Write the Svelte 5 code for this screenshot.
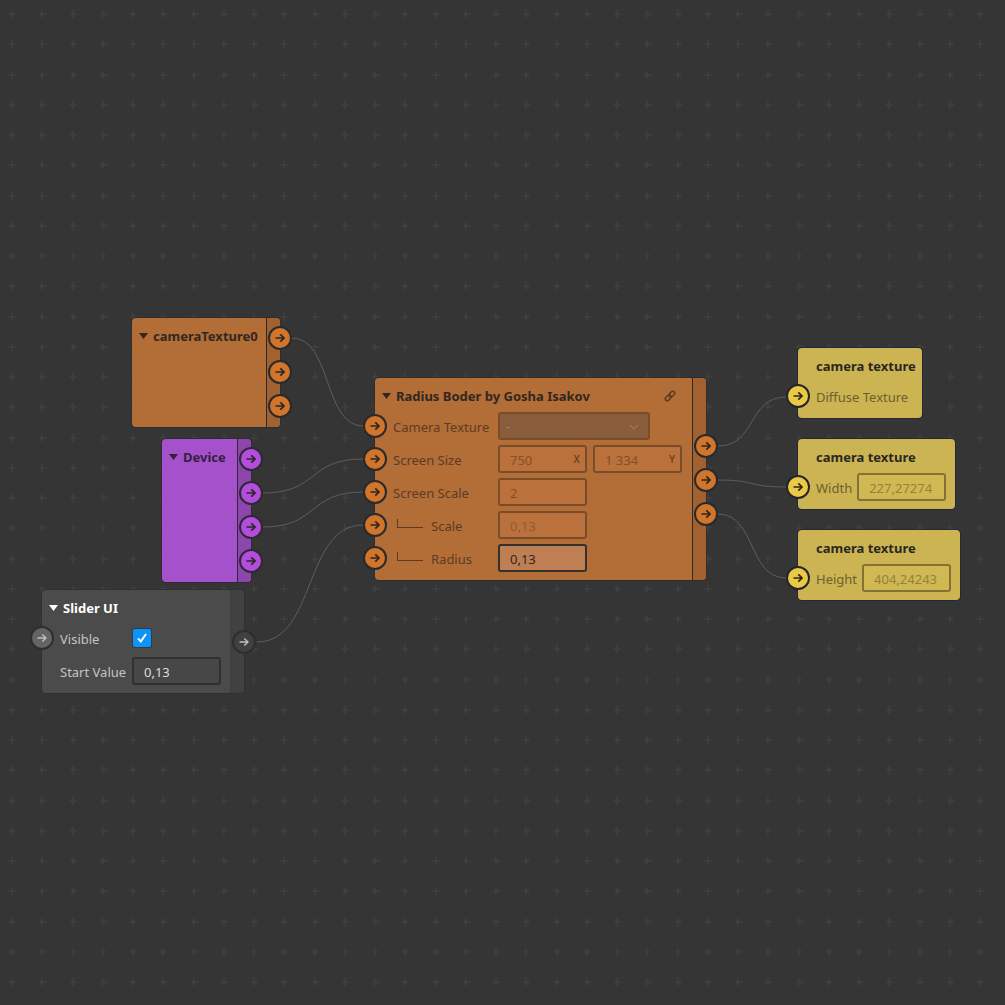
<script>
  const nodes = [
    {
      id: 'cam', title: 'cameraTexture0', theme: 'orange',
      x: 132, y: 318, width: 148, arrow: true, rows: [], outputs: 3, outTop: 8
    },
    {
      id: 'device', title: 'Device', theme: 'purple',
      x: 162, y: 439, width: 89, arrow: true, rows: [], outputs: 4, outTop: 8
    },
    {
      id: 'slider', title: 'Slider UI', theme: 'grey',
      x: 42, y: 590, width: 202, arrow: true, labelWidth: 72,
      rows: [
        { label: 'Visible', port: true, check: true },
        { label: 'Start Value', fields: [{ value: '0,13' }] }
      ],
      outputs: 1, outTop: 40
    },
    {
      id: 'radius', title: 'Radius Boder by Gosha Isakov', theme: 'orange',
      x: 375, y: 378, width: 331, arrow: true, link: true, labelWidth: 105,
      rows: [
        { label: 'Camera Texture', port: true, select: true },
        {
          label: 'Screen Size', port: true,
          fields: [
            { value: '750', unit: 'X', off: true },
            { value: '1 334', unit: 'Y', off: true }
          ]
        },
        { label: 'Screen Scale', port: true, fields: [{ value: '2', off: true }] },
        { label: 'Scale', port: true, child: true, fields: [{ value: '0,13', off: true, faint: true }] },
        { label: 'Radius', port: true, child: true, fields: [{ value: '0,13' }] }
      ],
      outputs: 3, outTop: 56
    },
    {
      id: 'diffuse', title: 'camera texture', theme: 'yellow',
      x: 798, y: 348, width: 124,
      rows: [{ label: 'Diffuse Texture', port: true }]
    },
    {
      id: 'width', title: 'camera texture', theme: 'yellow',
      x: 798, y: 439, width: 157,
      rows: [{ label: 'Width', port: true, fields: [{ value: '227,27274', off: true }] }]
    },
    {
      id: 'height', title: 'camera texture', theme: 'yellow',
      x: 798, y: 530, width: 162,
      rows: [{ label: 'Height', port: true, fields: [{ value: '404,24243', off: true }] }]
    }
  ];

  // x1, y1, x2, y2
  const wires = [
    [292, 338, 363, 426],
    [263, 493, 363, 459],
    [263, 527, 363, 492],
    [257, 642, 363, 525],
    [718, 446, 786, 397],
    [718, 480, 786, 487],
    [718, 514, 786, 578]
  ];

  const steps = [12, 42, 73, 103];

  function curve([x1, y1, x2, y2]) {
    const dx = (x2 - x1) * 0.56;
    return `M${x1} ${y1}C${x1 + dx} ${y1} ${x2 - dx} ${y2} ${x2} ${y2}`;
  }
</script>

{#snippet port(kind)}
  <span class="port {kind}">
    <svg viewBox="0 0 12 12" width="12" height="12" aria-hidden="true">
      <path d="M1.5 6H10M6.3 2.4L10 6L6.3 9.6" />
    </svg>
  </span>
{/snippet}

<main class="canvas">
  <svg class="layer" aria-hidden="true">
    <defs>
      <pattern id="grid" width="121" height="121" patternUnits="userSpaceOnUse">
        {#each steps as y}
          {#each steps as x}
            <path class="cross" d="M{x - 3} {y + 2}h7M{x} {y - 2}v8" />
          {/each}
        {/each}
      </pattern>
    </defs>
    <rect width="100%" height="100%" fill="url(#grid)" />
    {#each wires as wire}
      <path class="wire" d={curve(wire)} />
    {/each}
  </svg>

  {#each nodes as node (node.id)}
    <section class="node {node.theme}" style="left: {node.x}px; top: {node.y}px; width: {node.width}px">
      <div class="body">
        <header class:indent={!node.arrow}>
          {#if node.arrow}
            <svg class="arrow" viewBox="0 0 9 6" width="9" height="6" aria-hidden="true">
              <path d="M0 0H9L4.5 6Z" />
            </svg>
          {/if}
          <h2>{node.title}</h2>
          {#if node.link}
            <svg class="link" viewBox="0 0 12 12" width="12" height="12" aria-hidden="true">
              <g transform="rotate(-45 6 6)">
                <rect x="0.2" y="4" width="6.6" height="4" rx="2" />
                <rect x="5.2" y="4" width="6.6" height="4" rx="2" />
              </g>
            </svg>
          {/if}
        </header>

        {#if node.rows.length}
          <div class="rows">
            {#each node.rows as row, i}
              <div class="row" class:wired={row.port}>
                {#if row.port}{@render port('in')}{/if}
                <label
                  for="{node.id}-{i}-0"
                  class:child={row.child}
                  style:width={node.labelWidth ? `${node.labelWidth}px` : null}
                >
                  {#if row.child}<i class="branch"></i>{/if}{row.label}
                </label>
                {#if row.select}
                  <span class="select">
                    <select id="{node.id}-{i}-0" disabled><option>-</option></select>
                    <svg viewBox="0 0 10 6" width="10" height="6" aria-hidden="true">
                      <path d="M1 1L5 5L9 1" />
                    </svg>
                  </span>
                {/if}
                {#if row.check}
                  <span class="check">
                    <input type="checkbox" id="{node.id}-{i}-0" checked />
                    <svg viewBox="0 0 12 12" width="12" height="12" aria-hidden="true">
                      <path d="M2 6.5L4.8 9.5L10 2" />
                    </svg>
                  </span>
                {/if}
                {#if row.fields}
                  <div class="fields">
                    {#each row.fields as field, f}
                      <span class="field">
                        <input
                          type="text"
                          id="{node.id}-{i}-{f}"
                          aria-label={field.unit ? `${row.label} ${field.unit}` : null}
                          class:faint={field.faint}
                          value={field.value}
                          disabled={field.off}
                        />
                        {#if field.unit}<small>{field.unit}</small>{/if}
                      </span>
                    {/each}
                  </div>
                {/if}
              </div>
            {/each}
          </div>
        {/if}
      </div>

      {#if node.outputs}
        <div class="rail" style="padding-top: {node.outTop}px">
          {#each Array(node.outputs) as _}
            {@render port('out')}
          {/each}
        </div>
      {/if}
    </section>
  {/each}
</main>

<style>
  :global(body) {
    margin: 0;
    background: #353535;
  }

  .canvas {
    position: relative;
    min-height: 100vh;
    overflow: hidden;
    font-family: "Noto Sans", sans-serif;
    font-size: 13px;
    line-height: 18px;
  }

  .layer {
    position: absolute;
    inset: 0;
    width: 100%;
    height: 100%;
  }

  .cross {
    fill: none;
    stroke: #444444;
    stroke-width: 1;
  }

  .wire {
    fill: none;
    stroke: #5e5e5e;
    stroke-width: 1;
  }

  .node {
    position: absolute;
    display: flex;
    border-radius: 4px;
    background: var(--body);
    box-shadow: 0 0 0 1px var(--edge);
    color: var(--text);
  }

  .orange {
    --body: #b36d36;
    --rail: #a16130;
    --port: #d0752b;
    --edge: #2b2f34;
    --ring: #2b2a2a;
    --title: #33271f;
    --text: #5c3c24;
    --off: #845029;
    --line: #7a4c2a;
    --field: #bb713b;
  }

  .purple {
    --body: #a651cc;
    --rail: #8d46ad;
    --port: #b24ddd;
    --edge: #2e2b34;
    --ring: #2e2a32;
    --title: #33203c;
  }

  .grey {
    --body: #4b4b4b;
    --rail: #414141;
    --port: #646464;
    --edge: #303030;
    --ring: #2e2e2e;
    --title: #ffffff;
    --text: #c4c4c4;
    --line: #303030;
    --field: #474747;
  }

  .yellow {
    --body: #ccb452;
    --rail: #b39d45;
    --port: #eac946;
    --edge: #26283a;
    --ring: #25242b;
    --title: #2a2722;
    --text: #6b602f;
    --off: #94823c;
    --line: #827335;
    --field: #d0b853;
  }

  .body {
    flex: 1;
    min-width: 0;
  }

  header {
    box-sizing: border-box;
    display: flex;
    align-items: center;
    height: 34px;
    padding: 2px 16px 0 7px;
  }

  header.indent {
    padding: 2px 0 0 18px;
  }

  h2 {
    flex: 1;
    margin: 0;
    font-size: 13px;
    line-height: 18px;
    font-weight: 700;
    white-space: nowrap;
    color: var(--title);
  }

  .arrow {
    flex: none;
    margin-right: 5px;
    fill: var(--title);
  }

  .link {
    fill: none;
    stroke: var(--text);
    stroke-width: 1.5;
  }

  .rows {
    display: flex;
    flex-direction: column;
    gap: 5px;
    padding-bottom: 8px;
  }

  .row {
    display: flex;
    align-items: center;
    height: 28px;
    padding-left: 18px;
  }

  .row.wired {
    padding-left: 0;
  }

  .port {
    box-sizing: border-box;
    flex: none;
    display: flex;
    align-items: center;
    justify-content: center;
    width: 24px;
    height: 24px;
    border: 2px solid var(--ring);
    border-radius: 50%;
    background: var(--port);
  }

  .port path {
    fill: none;
    stroke: #2c2623;
    stroke-width: 1.7;
  }

  .port.in {
    margin-left: -12px;
    margin-right: 6px;
  }

  .grey .port path {
    stroke: #c0c0c0;
    stroke-width: 1.4;
  }

  .grey .port.out {
    background: #404040;
  }

  label {
    display: flex;
    align-items: center;
    flex: none;
    padding-top: 2px;
    font-size: 13px;
    white-space: nowrap;
  }

  .yellow label {
    margin-right: 5px;
  }

  .branch {
    width: 25px;
    height: 8px;
    margin: 0 8px 6px 4px;
    border-left: 1px solid var(--text);
    border-bottom: 1px solid var(--text);
  }

  .fields {
    display: flex;
    gap: 6px;
  }

  .field,
  .select,
  .check {
    position: relative;
    display: flex;
  }

  .field input,
  select {
    box-sizing: border-box;
    width: 89px;
    height: 28px;
    margin: 0;
    padding: 2px 10px 0;
    border: 2px solid var(--line);
    border-radius: 3px;
    background: var(--field);
    color: var(--off);
    font: inherit;
    opacity: 1;
    outline: none;
  }

  .field input.faint {
    color: #925b32;
  }

  .orange .field input:enabled {
    border-color: #33302d;
    background: #bf7f52;
    color: #2c2522;
  }

  .grey .field input {
    color: #dcdcdc;
  }

  .yellow .field input {
    padding: 2px 10px 0;
  }

  small {
    position: absolute;
    right: 7px;
    top: 5px;
    font-size: 10px;
    font-weight: 600;
    line-height: 18px;
    color: #6b4426;
  }

  select {
    width: 152px;
    padding: 0 6px;
    appearance: none;
    background: #895c3b;
    color: #ad7f5d;
  }

  .select svg {
    position: absolute;
    right: 11px;
    top: 12px;
    fill: none;
    stroke: #a5734e;
    stroke-width: 1.3;
  }

  .check input {
    width: 18px;
    height: 18px;
    margin: 0;
    appearance: none;
    border-radius: 2px;
    background: #0d94fb;
    box-shadow: 0 0 0 1px #353b42;
  }

  .check {
    margin-left: 1px;
  }

  .check svg {
    position: absolute;
    inset: 3px;
    fill: none;
    stroke: #ffffff;
    stroke-width: 2;
    pointer-events: none;
  }

  .rail {
    box-sizing: border-box;
    display: flex;
    flex-direction: column;
    gap: 10px;
    width: 14px;
    padding: 0 0 9px 1px;
    border-left: 1px solid var(--ring);
    border-radius: 0 4px 4px 0;
    background: var(--rail);
  }

  .grey .rail {
    border-left-color: #3c3c3c;
  }
</style>
